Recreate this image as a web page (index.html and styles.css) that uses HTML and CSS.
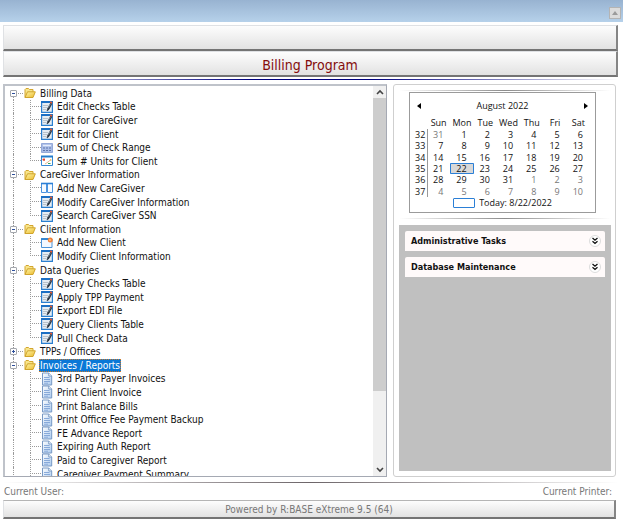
FILE: index.html
```html
<!DOCTYPE html>
<html lang="en">
<head>
<meta charset="utf-8">
<title>Billing Program</title>
<link rel="stylesheet" href="styles.css">
</head>
<body>
<svg class="defs" aria-hidden="true">
  <defs>
    <linearGradient id="gold" x1="0" y1="0" x2="1" y2="1"><stop offset="0" stop-color="#fff6a8"/><stop offset="1" stop-color="#eab92c"/></linearGradient>
    <linearGradient id="paper" x1="0" y1="0" x2="1" y2="1"><stop offset="0" stop-color="#ffffff"/><stop offset="1" stop-color="#a9c9ee"/></linearGradient>
    <symbol id="folder" viewBox="0 0 12 12">
      <path d="M1 10.5V2.5L2 1.5H4.5L5.5 2.5H9V5" fill="#f8e58a" stroke="#d3a52e"/>
      <path d="M1 10.5L3.5 4.8H11.3L9 10.5Z" fill="url(#gold)" stroke="#d0a42c"/>
    </symbol>
    <symbol id="edit" viewBox="0 0 12 12">
      <path d="M.6 1H11.4V11.4H.6Z" fill="#e6edf3" stroke="#2a7fd0" stroke-width="1.2"/>
      <path d="M0 1H12" stroke="#1b6fc4" stroke-width="2"/>
      <path d="M2 4.5H7M2 6.5H6M2 8.5H5" stroke="#b9c2ca"/>
      <path d="M9.8 1.8L6.6 7.4L6 10L8 8.4L11 2.6Z" fill="#26313c" stroke="#26313c" stroke-width=".6"/>
      <path d="M9.4 3L7.4 6.6" stroke="#8da0b0" stroke-width=".7"/>
      <path d="M9.2 .9L11 2" stroke="#e35a38" stroke-width="1.8"/>
    </symbol>
    <symbol id="calc" viewBox="0 0 12 12">
      <path d="M.5 1.5H11.5V10.5H.5Z" fill="#a9bce6" stroke="#94a9d9"/>
      <path d="M2 3.5H10" stroke="#e6edfb" stroke-width="1.4"/>
      <path d="M2 6H10M2 8.5H10" stroke="#5f76ac" stroke-width="1.2" stroke-dasharray="2 1"/>
    </symbol>
    <symbol id="chart" viewBox="0 0 12 12">
      <path d="M.5 1.5H11.5V10.5H.5Z" fill="#fff" stroke="#3589d4"/>
      <path d="M0 1.5H12" stroke="#237ccc" stroke-width="2"/>
      <path d="M1.5 4.5H4M3 3.5V6" stroke="#e0462e" stroke-width="1.3"/>
      <path d="M4 9L7 7L10 4.5" fill="none" stroke="#e7b78c"/>
      <path d="M7 8.5H9.5" stroke="#36a05a"/><path d="M9 5H10.5" stroke="#e4ab30"/>
    </symbol>
    <symbol id="columns" viewBox="0 0 12 12">
      <path d="M.5 1.5H5.5V10.5H.5ZM6.5 1.5H11.5V10.5H6.5Z" fill="#f6faff" stroke="#4a93df"/>
      <path d="M0 1.5H12" stroke="#2b7fd6" stroke-width="1.6"/>
    </symbol>
    <symbol id="new" viewBox="0 0 12 12">
      <path d="M.5 2H11V10.5H.5Z" fill="#f3f8ff" stroke="#4b93d9"/>
      <path d="M0 2H8" stroke="#2a7fd0" stroke-width="1.8"/>
      <circle cx="9.3" cy="3" r="2.5" fill="#f2843c"/><circle cx="9" cy="3" r="1" fill="#ffc187"/>
    </symbol>
    <symbol id="doc" viewBox="0 0 12 14">
      <path d="M1.5 1H7.8L10.7 4V13H1.5Z" fill="url(#paper)" stroke="#7899c4"/>
      <path d="M7.8 1V4H10.7" fill="#fff" stroke="#7899c4"/>
      <path d="M3 5.5H8.5M3 7.5H9M3 9.5H9M3 11.2H7" stroke="#7fa3d6" stroke-width=".9"/>
    </symbol>
    <symbol id="more" viewBox="0 0 12 12">
      <circle cx="6" cy="6" r="5.5" fill="#fff" stroke="#dcdcdc"/>
      <path d="M3.5 3L6 5.2L8.5 3M3.5 6.3L6 8.5L8.5 6.3" fill="none" stroke="#111" stroke-width="1.3"/>
    </symbol>
  </defs>
</svg>

<header class="titlebar">
  <button class="collapse" aria-label="Collapse window"><svg viewBox="0 0 6 4"><path d="M0 4L3 0L6 4Z" fill="#9b9b9b"/></svg></button>
</header>

<div class="app">
  <div class="band"></div>
  <h1 class="band heading">Billing Program</h1>
  <div class="rule rule-blue"></div>

  <main class="columns">
    <nav class="tree-panel" aria-label="Programs">
      <ul class="tree" role="tree">
        <li class="group first" role="treeitem" aria-level="1" aria-expanded="true"><button class="toggle" aria-label="Toggle Billing Data"></button><svg class="icon"><use href="#folder"/></svg><a href="#">Billing Data</a></li>
        <li class="leaf" role="treeitem" aria-level="2"><svg class="icon"><use href="#edit"/></svg><a href="#">Edit Checks Table</a></li>
        <li class="leaf" role="treeitem" aria-level="2"><svg class="icon"><use href="#edit"/></svg><a href="#">Edit for CareGiver</a></li>
        <li class="leaf" role="treeitem" aria-level="2"><svg class="icon"><use href="#edit"/></svg><a href="#">Edit for Client</a></li>
        <li class="leaf" role="treeitem" aria-level="2"><svg class="icon"><use href="#calc"/></svg><a href="#">Sum of Check Range</a></li>
        <li class="leaf last" role="treeitem" aria-level="2"><svg class="icon"><use href="#chart"/></svg><a href="#">Sum # Units for Client</a></li>
        <li class="group" role="treeitem" aria-level="1" aria-expanded="true"><button class="toggle" aria-label="Toggle CareGiver Information"></button><svg class="icon"><use href="#folder"/></svg><a href="#">CareGiver Information</a></li>
        <li class="leaf" role="treeitem" aria-level="2"><svg class="icon"><use href="#columns"/></svg><a href="#">Add New CareGiver</a></li>
        <li class="leaf" role="treeitem" aria-level="2"><svg class="icon"><use href="#edit"/></svg><a href="#">Modify CareGiver Information</a></li>
        <li class="leaf last" role="treeitem" aria-level="2"><svg class="icon"><use href="#edit"/></svg><a href="#">Search CareGiver SSN</a></li>
        <li class="group" role="treeitem" aria-level="1" aria-expanded="true"><button class="toggle" aria-label="Toggle Client Information"></button><svg class="icon"><use href="#folder"/></svg><a href="#">Client Information</a></li>
        <li class="leaf" role="treeitem" aria-level="2"><svg class="icon"><use href="#new"/></svg><a href="#">Add New Client</a></li>
        <li class="leaf last" role="treeitem" aria-level="2"><svg class="icon"><use href="#edit"/></svg><a href="#">Modify Client Information</a></li>
        <li class="group" role="treeitem" aria-level="1" aria-expanded="true"><button class="toggle" aria-label="Toggle Data Queries"></button><svg class="icon"><use href="#folder"/></svg><a href="#">Data Queries</a></li>
        <li class="leaf" role="treeitem" aria-level="2"><svg class="icon"><use href="#edit"/></svg><a href="#">Query Checks Table</a></li>
        <li class="leaf" role="treeitem" aria-level="2"><svg class="icon"><use href="#edit"/></svg><a href="#">Apply TPP Payment</a></li>
        <li class="leaf" role="treeitem" aria-level="2"><svg class="icon"><use href="#edit"/></svg><a href="#">Export EDI File</a></li>
        <li class="leaf" role="treeitem" aria-level="2"><svg class="icon"><use href="#edit"/></svg><a href="#">Query Clients Table</a></li>
        <li class="leaf last" role="treeitem" aria-level="2"><svg class="icon"><use href="#edit"/></svg><a href="#">Pull Check Data</a></li>
        <li class="group closed" role="treeitem" aria-level="1" aria-expanded="false"><button class="toggle" aria-label="Toggle TPPs / Offices"></button><svg class="icon"><use href="#folder"/></svg><a href="#">TPPs / Offices</a></li>
        <li class="group" role="treeitem" aria-level="1" aria-expanded="true" aria-selected="true"><button class="toggle" aria-label="Toggle Invoices / Reports"></button><svg class="icon"><use href="#folder"/></svg><a href="#">Invoices / Reports</a></li>
        <li class="leaf" role="treeitem" aria-level="2"><svg class="icon doc"><use href="#doc"/></svg><a href="#">3rd Party Payer Invoices</a></li>
        <li class="leaf" role="treeitem" aria-level="2"><svg class="icon doc"><use href="#doc"/></svg><a href="#">Print Client Invoice</a></li>
        <li class="leaf" role="treeitem" aria-level="2"><svg class="icon doc"><use href="#doc"/></svg><a href="#">Print Balance Bills</a></li>
        <li class="leaf" role="treeitem" aria-level="2"><svg class="icon doc"><use href="#doc"/></svg><a href="#">Print Office Fee Payment Backup</a></li>
        <li class="leaf" role="treeitem" aria-level="2"><svg class="icon doc"><use href="#doc"/></svg><a href="#">FE Advance Report</a></li>
        <li class="leaf" role="treeitem" aria-level="2"><svg class="icon doc"><use href="#doc"/></svg><a href="#">Expiring Auth Report</a></li>
        <li class="leaf" role="treeitem" aria-level="2"><svg class="icon doc"><use href="#doc"/></svg><a href="#">Paid to Caregiver Report</a></li>
        <li class="leaf" role="treeitem" aria-level="2"><svg class="icon doc"><use href="#doc"/></svg><a href="#">Caregiver Payment Summary</a></li>
      </ul>
      <div class="scrollbar">
        <button aria-label="Scroll up"><svg viewBox="0 0 8 6"><path d="M1 5L4 2L7 5" fill="none" stroke="#444" stroke-width="1.6"/></svg></button>
        <div class="track"><div class="thumb"></div></div>
        <button aria-label="Scroll down"><svg viewBox="0 0 8 6"><path d="M1 1L4 4L7 1" fill="none" stroke="#444" stroke-width="1.6"/></svg></button>
      </div>
    </nav>

    <aside class="side">
      <div class="rule rule-gray"></div>
      <section class="calendar" aria-label="Calendar">
        <div class="month">
          <button aria-label="Previous month"><svg viewBox="0 0 4 6"><path d="M4 0L0 3L4 6Z"/></svg></button>
          <span>August 2022</span>
          <button aria-label="Next month"><svg viewBox="0 0 4 6"><path d="M0 0L4 3L0 6Z"/></svg></button>
        </div>
        <table>
          <thead><tr><td></td><th>Sun</th><th>Mon</th><th>Tue</th><th>Wed</th><th>Thu</th><th>Fri</th><th>Sat</th></tr></thead>
          <tbody>
            <tr><th>32</th><td class="off">31</td><td>1</td><td>2</td><td>3</td><td>4</td><td>5</td><td>6</td></tr>
            <tr><th>33</th><td>7</td><td>8</td><td>9</td><td>10</td><td>11</td><td>12</td><td>13</td></tr>
            <tr><th>34</th><td>14</td><td>15</td><td>16</td><td>17</td><td>18</td><td>19</td><td>20</td></tr>
            <tr><th>35</th><td>21</td><td class="today">22</td><td>23</td><td>24</td><td>25</td><td>26</td><td>27</td></tr>
            <tr><th>36</th><td>28</td><td>29</td><td>30</td><td>31</td><td class="off">1</td><td class="off">2</td><td class="off">3</td></tr>
            <tr><th>37</th><td class="off">4</td><td class="off">5</td><td class="off">6</td><td class="off">7</td><td class="off">8</td><td class="off">9</td><td class="off">10</td></tr>
          </tbody>
        </table>
        <div class="today-line"><span class="swatch"></span>Today: 8/22/2022</div>
      </section>
      <div class="rule rule-gray"></div>
      <section class="tasks">
        <button class="task">Administrative Tasks<svg><use href="#more"/></svg></button>
        <button class="task">Database Maintenance<svg><use href="#more"/></svg></button>
      </section>
    </aside>
  </main>

  <div class="rule rule-dark"></div>
  <div class="status"><span>Current User:</span><span>Current Printer:</span></div>
  <footer class="band powered">Powered by R:BASE eXtreme 9.5 (64)</footer>
</div>
</body>
</html>
```
FILE: styles.css
```css
* { box-sizing: border-box; }
body {
  margin: 0;
  min-height: 100vh;
  display: flex;
  flex-direction: column;
  background: #fff;
  color: #111;
  font: 10px/13px "DejaVu Sans Condensed", "DejaVu Sans", sans-serif;
}
button { margin: 0; padding: 0; border: 0; background: none; font: inherit; color: inherit; }
a { color: inherit; text-decoration: none; }
.defs { position: absolute; width: 0; height: 0; }

.titlebar {
  height: 22px;
  padding: 7px 2px 0;
  display: flex;
  justify-content: flex-end;
  align-items: flex-start;
  background: linear-gradient(#98b3d1, #b6d1ea);
}
.collapse {
  width: 12px;
  height: 12px;
  display: flex;
  align-items: center;
  justify-content: center;
  background: #dcdcdc;
  border: 1px solid #b4b4b4;
}
.collapse svg { width: 6px; height: 4px; }

.app {
  flex: 1;
  display: flex;
  flex-direction: column;
  padding: 3px 5px 8px 3px;
}
.band {
  height: 26px;
  border: 1px solid #dfe1e4;
  border-right: 2px solid #858585;
  border-bottom: 2px solid #747474;
  background: linear-gradient(#fdfdfd, #e2e2e2);
}
.heading {
  margin: 0;
  text-align: center;
  font-size: 14px;
  font-weight: 400;
  line-height: 26px;
  color: #850d0d;
}

.rule { flex: none; height: 1px; }
.rule-blue { margin: 2px 0 4px; background: linear-gradient(90deg, #fff, #00007e 40%, #00007e 60%, #fff); }
.rule-gray { background: linear-gradient(90deg, #fff, #8c8c8c, #fff); }
.rule-dark { margin-top: 5px; background: linear-gradient(90deg, #fff, #6c6468, #fff); }

.columns { flex: 1; display: flex; gap: 6px; }
.tree-panel {
  flex: 1;
  display: flex;
  overflow: hidden;
  border-style: solid;
  border-width: 2px 1px 1px 2px;
  border-color: #bfc3ca #a5a9b3 #a5a9b3 #bfc3ca;
}
.tree { flex: 1; height: 0; margin: 0; padding: 0; list-style: none; }
.tree li {
  height: 14px;
  display: flex;
  align-items: center;
  position: relative;
}
.tree li:nth-child(5n + 2), .tree li:nth-child(5n + 5) { height: 13px; }
.tree li::before {
  content: "";
  position: absolute;
  left: 8px;
  top: 0;
  bottom: 0;
  border-left: 1px dotted #9a9a9a;
}
.tree .first::before { top: 7px; }
.group { padding-left: 5px; }
.toggle {
  position: relative;
  width: 7px;
  height: 7px;
  border: 1px solid #a4a7ad;
  border-radius: 1px;
  background: linear-gradient(#2d4f9c, #2d4f9c) center / 3px 1px no-repeat, #fff;
}
.closed .toggle {
  background: linear-gradient(#2d4f9c, #2d4f9c) center / 3px 1px no-repeat, linear-gradient(#2d4f9c, #2d4f9c) center / 1px 3px no-repeat, #fff;
}
.group .icon { margin-left: 7px; }
.group .toggle::after {
  content: "";
  position: absolute;
  left: 7px;
  top: 2px;
  width: 5px;
  border-top: 1px dotted #9a9a9a;
}
.leaf {
  padding-left: 36px;
  background: repeating-linear-gradient(#9a9a9a 0 1px, transparent 1px 2px) 25px 0 / 1px 100% no-repeat;
}
.leaf.last { background-size: 1px 7px; }
.leaf::after {
  content: "";
  position: absolute;
  left: 27px;
  top: 6px;
  width: 9px;
  border-top: 1px dotted #9a9a9a;
}
.icon { flex: none; width: 12px; height: 12px; }
.icon.doc { height: 14px; }
.tree a { padding: 0 1px; margin-left: 3px; line-height: 13px; white-space: nowrap; }
[aria-selected] a { color: #fff; background: #0a78d7; outline: 1px dotted #c97a2d; outline-offset: -1px; }

.scrollbar { width: 13px; display: flex; flex-direction: column; background: #f0f0f0; }
.scrollbar button { height: 12px; display: flex; align-items: center; justify-content: center; }
.scrollbar svg { width: 8px; height: 6px; }
.track { flex: 1; }
.thumb { height: 80%; background: #cdcdcd; }

.side {
  flex: none;
  width: 223px;
  margin-right: 2px;
  padding: 5px 4px 5px 5px;
  display: flex;
  flex-direction: column;
  border: 1px solid #cfcfcf;
  border-radius: 3px;
}
.calendar {
  margin: 1px 15px 5px 10px;
  padding: 7px 5px 4px;
  border: 1px solid #9b9b9b;
  font-family: "Open Sans", "Noto Sans", sans-serif;
  font-size: 9px;
  line-height: 11px;
}
.month { display: flex; justify-content: space-between; align-items: center; padding: 0 2px; }
.month button { width: 4px; height: 10px; display: flex; align-items: center; }
.month svg { width: 4px; height: 6px; }
table { width: 100%; height: 82px; margin-top: 4px; table-layout: fixed; border-collapse: collapse; }
th, td { padding: 0; font-weight: 400; text-align: right; line-height: 11px; }
thead th { height: 14px; text-align: center; }
thead td { width: 12px; }
tbody td { padding-right: 7px; }
tbody th { text-align: left; border-right: 1px solid #999; }
.off { color: #777; }
.today { background: #d8d8d8; box-shadow: inset 0 0 0 1px #2b7fd6; border-radius: 1px; }
.today-line { display: flex; justify-content: center; align-items: center; gap: 4px; }
.swatch { width: 22px; height: 10px; border: 1px solid #2b7fd6; border-radius: 1px; }

.tasks { flex: 1; margin-top: 6px; padding: 6px; display: flex; flex-direction: column; gap: 6px; background: #c0c0c0; }
.task {
  height: 20px;
  padding: 0 4px 0 6px;
  display: flex;
  align-items: center;
  justify-content: space-between;
  border-radius: 2px 2px 0 0;
  background: #fffafa;
  font-size: 9px;
  font-weight: 700;
}
.task svg { width: 12px; height: 12px; }

.status { display: flex; justify-content: space-between; padding: 2px 6px 2px 1px; line-height: 13px; color: #777; }
.powered {
  height: 19px;
  margin-right: 2px;
  border-top-color: #b5b5b5;
  text-align: center;
  line-height: 17px;
  color: #777;
}
```
